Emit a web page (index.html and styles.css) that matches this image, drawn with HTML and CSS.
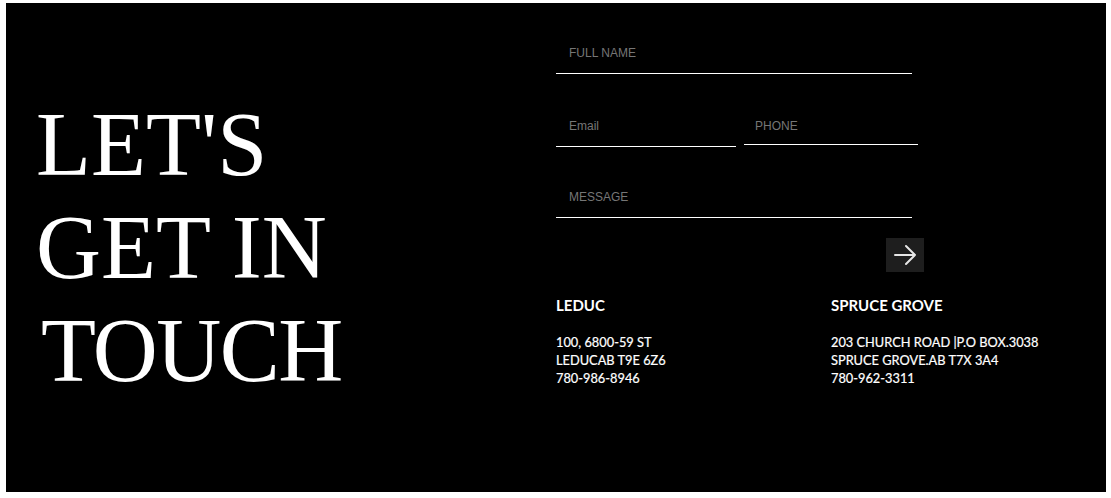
FILE: index.html
```html
<!DOCTYPE html>
<html lang="en">
<head>
<meta charset="utf-8">
<title>Contact</title>
<link rel="stylesheet" href="styles.css">
</head>
<body>
<main class="contact">
  <section class="intro">
    <h1 class="title">LET'S<br>GET IN<br><span class="last">TOUCH</span></h1>
  </section>
  <section class="side">
    <form class="form">
      <input class="field field-full" type="text" placeholder="FULL NAME">
      <div class="row">
        <input class="field field-email" type="email" placeholder="Email">
        <input class="field field-phone" type="tel" placeholder="PHONE">
      </div>
      <input class="field field-message" type="text" placeholder="MESSAGE">
      <div class="actions">
        <button class="send" type="button" aria-label="Send">
          <svg width="24" height="24" viewBox="0 0 24 24" fill="none" stroke="#e6e6e6" stroke-width="2" stroke-linecap="round" stroke-linejoin="round"><path d="M2 12h20M13 3l9 9-9 9"/></svg>
        </button>
      </div>
    </form>
    <div class="offices">
      <div class="office">
        <h2 class="office-name">LEDUC</h2>
        <p class="office-info">100, 6800-59 ST<br>LEDUCAB T9E 6Z6<br>780-986-8946</p>
      </div>
      <div class="office">
        <h2 class="office-name">SPRUCE GROVE</h2>
        <p class="office-info">203 CHURCH ROAD |P.O BOX.3038<br>SPRUCE GROVE.AB T7X 3A4<br>780-962-3311</p>
      </div>
    </div>
  </section>
</main>
</body>
</html>
```
FILE: styles.css
```css
html, body {
  margin: 0;
  padding: 0;
  background: #fff;
}

.contact {
  margin: 3px 5px 0 6px;
  height: 489px;
  background: #000;
  display: grid;
  grid-template-columns: 550px 550px;
}

.intro {
  display: flex;
  align-items: center;
  padding-left: 30px;
}

.title {
  margin: 0;
  font-family: "Liberation Serif", "Times New Roman", serif;
  font-weight: normal;
  font-size: 90px;
  line-height: normal;
  color: #fff;
}

.title .last {
  padding-left: 5px;
  letter-spacing: -1.5px;
}

.side {
  padding-top: 30px;
  display: flex;
  flex-direction: column;
}

.form {
  width: 368px;
  display: flex;
  flex-direction: column;
}

.field {
  display: block;
  box-sizing: border-box;
  margin: 0;
  padding: 0 13px;
  border: 0;
  border-bottom: 1px solid #fff;
  border-radius: 0;
  background: transparent;
  color: #fff;
  font-family: "Liberation Sans", Arial, sans-serif;
  font-size: 12px;
  outline: none;
}

.field::placeholder {
  color: #767676;
  opacity: 1;
}

.field-full {
  width: 356px;
  height: 41px;
}

.row {
  margin-top: 32px;
  display: flex;
  align-items: center;
  gap: 8px;
}

.field-email {
  width: 180px;
  height: 41px;
}

.field-phone {
  width: 174px;
  height: 36px;
  padding-left: 11px;
}

.field-message {
  margin-top: 29px;
  width: 356px;
  height: 42px;
}

.actions {
  margin-top: 20px;
  display: flex;
  justify-content: flex-end;
}

.send {
  width: 38px;
  height: 34px;
  padding: 0;
  border: 0;
  background: #1e1e1e;
  display: flex;
  align-items: center;
  justify-content: center;
  cursor: pointer;
}

.offices {
  margin-top: 24px;
  display: grid;
  grid-template-columns: 275px 1fr;
}

.office-name {
  margin: 0;
  font-family: Lato, "Open Sans", sans-serif;
  font-weight: 700;
  font-size: 15px;
  line-height: 18px;
  color: #fff;
}

.office-info {
  margin: 19px 0 0;
  font-family: Lato, "Open Sans", sans-serif;
  font-size: 12.8px;
  line-height: 18px;
  color: #fff;
  -webkit-text-stroke: 0.2px #fff;
}
```
